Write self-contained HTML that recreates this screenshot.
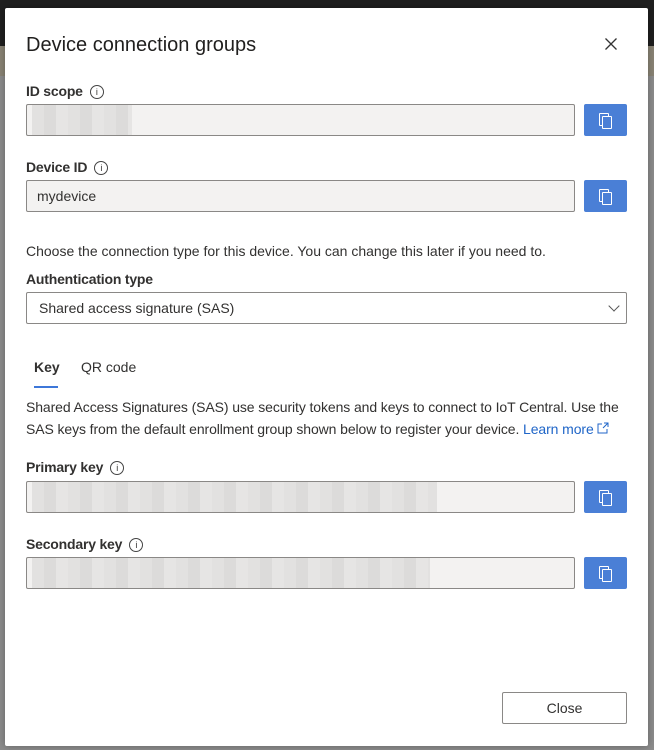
<!DOCTYPE html>
<html><head><style>
*{box-sizing:border-box;margin:0;padding:0}
body{width:654px;height:750px;background:#8c8c8c;font-family:"Liberation Sans",sans-serif;color:#323130;position:relative;overflow:hidden}
.top{position:absolute;left:0;top:0;width:654px;height:46px;background:#1f1f1f}
.band{position:absolute;left:0;top:46px;width:654px;height:30px;background:#8a8475}
.dlg{position:absolute;left:5px;top:8px;width:643px;height:738px;background:#fff;border-radius:2px;box-shadow:0 0 8px rgba(0,0,0,.3)}
.a{position:absolute}
h1{position:absolute;left:21px;top:26px;font-size:20px;font-weight:normal;color:#201f1e}
.lbl{position:absolute;left:21px;font-size:14px;font-weight:bold;color:#323130;letter-spacing:-0.2px}
.lbl span.i{display:inline-block;width:14px;height:14px;border:1px solid #444;border-radius:50%;font-size:9px;text-align:center;line-height:12px;margin-left:7px;vertical-align:1px;font-weight:normal}
.inp{position:absolute;left:21px;width:549px;height:32px;background:#f3f2f1;border:1px solid #8a8886;border-radius:2px;font-size:14px;padding:7px 10px;color:#323130}
.btn{position:absolute;left:579px;width:43px;height:32px;background:#4a7fd6;border-radius:2px}
.btn::before{content:"";position:absolute;left:15px;top:9px;width:8px;height:11px;border:1.5px solid #fff;border-radius:1px}
.btn::after{content:"";position:absolute;left:18px;top:12px;width:8px;height:11px;border:1.5px solid #fff;background:#4a7fd6;border-radius:1px}
.blur{position:absolute;top:0;height:30px;background:repeating-linear-gradient(90deg,#e2e1e0 0 12px,#dcdbda 12px 24px,#e6e5e4 24px 36px)}
.txt{position:absolute;left:21px;font-size:14px;color:#323130;line-height:22px}
</style></head><body>
<div class="top"></div><div class="band"></div>
<div class="dlg">
<h1>Device connection groups</h1>
<svg class="a" style="left:600px;top:30px" width="12" height="12" viewBox="0 0 12 12"><path d="M0.5 0.5L11.5 11.5M11.5 0.5L0.5 11.5" stroke="#333" stroke-width="1.3"/></svg>
<div class="lbl" style="top:75px">ID scope<span class="i">i</span></div>
<div class="inp" style="top:96px"><div class="blur" style="left:5px;width:100px"></div></div>
<div class="btn" style="top:96px"></div>
<div class="lbl" style="top:151px">Device ID<span class="i">i</span></div>
<div class="inp" style="top:172px">mydevice</div>
<div class="btn" style="top:172px"></div>
<div class="txt" style="top:232px">Choose the connection type for this device. You can change this later if you need to.</div>
<div class="lbl" style="top:263px">Authentication type</div>
<div class="inp" style="top:284px;width:601px;background:#fff;padding-left:12px">Shared access signature (SAS)<span style="position:absolute;right:8px;top:9px;width:8px;height:8px;border-right:1.3px solid #555;border-bottom:1.3px solid #555;transform:rotate(45deg)"></span></div>
<div class="a" style="left:29px;top:351px;font-size:14px;font-weight:bold">Key</div>
<div class="a" style="left:29px;top:378px;width:24px;height:2px;background:#3d77d9"></div>
<div class="a" style="left:76px;top:351px;font-size:14px">QR code</div>
<div class="txt" style="top:388px;letter-spacing:-0.1px">Shared Access Signatures (SAS) use security tokens and keys to connect to IoT Central. Use the<br>SAS keys from the default enrollment group shown below to register your device. <span style="color:#2066c8">Learn more</span> <svg width="12" height="12" viewBox="0 0 12 12" style="vertical-align:0"><path d="M5 2H1V11H10V7M7 1H11V5M11 1L6 6" stroke="#2066c8" fill="none" stroke-width="1"/></svg></div>
<div class="lbl" style="top:451px">Primary key<span class="i">i</span></div>
<div class="inp" style="top:473px"><div class="blur" style="left:5px;width:405px"></div></div>
<div class="btn" style="top:473px"></div>
<div class="lbl" style="top:528px">Secondary key<span class="i">i</span></div>
<div class="inp" style="top:549px"><div class="blur" style="left:5px;width:398px"></div></div>
<div class="btn" style="top:549px"></div>
<div class="a" style="left:497px;top:684px;width:125px;height:32px;border:1px solid #8a8886;border-radius:2px;font-size:14px;text-align:center;line-height:30px">Close</div>
</div>
</body></html>
